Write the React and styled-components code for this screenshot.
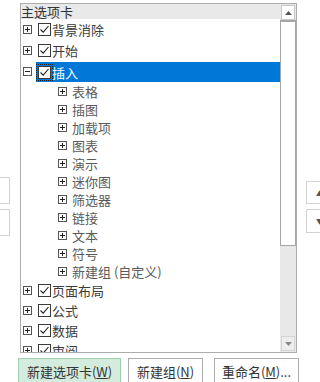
import React from "react";
import styled, { createGlobalStyle } from "styled-components";

const GlobalStyle = createGlobalStyle`
  html, body {
    margin: 0;
    padding: 0;
    background: #fff;
    width: 320px;
    height: 382px;
    overflow: hidden;
  }
  body {
    font-family: "Noto Sans CJK SC", "Liberation Sans", sans-serif;
    font-size: 13px;
    color: #3c3c3c;
  }
`;

const items = [
  { label: "背景消除", checked: true },
  { label: "开始", checked: true },
  {
    label: "插入",
    checked: true,
    selected: true,
    open: true,
    children: ["表格", "插图", "加载项", "图表", "演示", "迷你图", "筛选器", "链接", "文本", "符号", "新建组 (自定义)"],
  },
  { label: "页面布局", checked: true },
  { label: "公式", checked: true },
  { label: "数据", checked: true },
  { label: "审阅", checked: true },
];

const Page = styled.div`
  display: grid;
  grid-template-columns: 10px 10px 277px 9px 14px;
  grid-template-rows: 350px auto;
  row-gap: 5px;
  padding-top: 3px;
`;

const Side = styled.div`
  grid-column: ${(p) => p.$col};
  display: flex;
  flex-direction: column;
  gap: 5px;
  padding-top: ${(p) => p.$top}px;
`;

const SideBox = styled.div`
  height: ${(p) => p.$h}px;
  border: 1px solid #d2d2d2;
  ${(p) => (p.$right ? "border-right: none;" : "border-left: none;")}
  background: #fff;
  display: flex;
  align-items: center;
  justify-content: flex-end;
  font-size: 7px;
  color: #555;
  overflow: hidden;
  span {
    margin-right: -3px;
  }
`;

const Panel = styled.div`
  grid-column: 3;
  border: 1px solid #acacac;
  display: flex;
  overflow: hidden;
`;

const List = styled.div`
  flex: 1;
  display: flex;
  flex-direction: column;
  overflow: hidden;
`;

const Header = styled.div`
  height: 15px;
  flex: none;
  background: #e9e9e9;
  display: flex;
  align-items: center;
  color: #333;
  white-space: nowrap;
`;

const Row = styled.div`
  display: flex;
  align-items: center;
  flex: none;
  height: ${(p) => p.$h}px;
  padding-left: ${(p) => p.$indent}px;
  white-space: nowrap;
`;

const Label = styled.div`
  flex: 1;
  align-self: stretch;
  display: flex;
  align-items: center;
  margin: ${(p) => (p.$selected ? "1px 0 0 4px" : "0 0 0 4px")};
  padding-left: 2px;
  background: ${(p) => (p.$selected ? "#0078d7" : "transparent")};
  color: ${(p) => (p.$selected ? "#fff" : "#3c3c3c")};
`;

const SubText = styled.span`
  margin-left: 5px;
  color: #5a5a5a;
`;

const Check = styled.div`
  width: 13px;
  height: 13px;
  flex: none;
  margin-right: 1px;
  outline: ${(p) => (p.$focus ? "1px dotted #222" : "none")};
  outline-offset: 1px;
  display: flex;
`;

const Scrollbar = styled.div`
  width: 16px;
  flex: none;
  background: #e8e8e8;
  display: flex;
  flex-direction: column;
  padding-top: 1px;
  box-sizing: border-box;
`;

const ArrowButton = styled.div`
  height: 15px;
  flex: none;
  box-sizing: border-box;
  border: 1px solid ${(p) => (p.$light ? "#d4d4d4" : "#c8c8c8")};
  background: ${(p) => (p.$light ? "#ededed" : "#fff")};
  display: flex;
  align-items: center;
  justify-content: center;
  margin: 0 1px;
`;

const Thumb = styled.div`
  height: 226px;
  flex: none;
  box-sizing: border-box;
  border: 1px solid #a6a6a6;
  border-top-width: 2px;
  background: #fff;
`;

const Track = styled.div`
  flex: 1;
`;

const Spacer = styled.div`
  height: 1px;
  flex: none;
`;

const Buttons = styled.div`
  grid-column: 1 / -1;
  display: flex;
  padding-left: 18px;
  gap: 7px;
`;

const Button = styled.div`
  width: ${(p) => p.$w}px;
  margin-left: ${(p) => p.$ml || 0}px;
  height: 26px;
  box-sizing: border-box;
  border: 1px solid ${(p) => (p.$primary ? "#9fcdb0" : "#adadad")};
  background: ${(p) => (p.$primary ? "#d3ecdd" : "#fff")};
  display: flex;
  align-items: center;
  justify-content: center;
  color: #333;
  white-space: nowrap;
  u {
    text-decoration: underline;
  }
`;

const Expander = ({ open }) => (
  <svg width="9" height="9" viewBox="0 0 9 9" style={{ flex: "none" }}>
    <rect x="0.5" y="0.5" width="8" height="8" fill="#fff" stroke="#555" />
    <line x1="2" y1="4.5" x2="7" y2="4.5" stroke="#222" />
    {!open && <line x1="4.5" y1="2" x2="4.5" y2="7" stroke="#222" />}
  </svg>
);

const CheckBox = ({ focus }) => (
  <Check $focus={focus}>
    <svg width="13" height="13" viewBox="0 0 13 13">
      <rect x="0.5" y="0.5" width="12" height="12" fill="#fff" stroke="#3a3a3a" />
      <path d="M2.5 6.5 L5.2 9.2 L10.5 3" fill="none" stroke="#222" strokeWidth="1.1" />
    </svg>
  </Check>
);

const Tri = ({ down }) => (
  <svg width="7" height="4" viewBox="0 0 7 4">
    <path d={down ? "M0 0 H7 L3.5 4 Z" : "M0 4 H7 L3.5 0 Z"} fill={down ? "#888" : "#555"} />
  </svg>
);

const App = () => {
  const rows = [];
  items.forEach((it, i) => {
    rows.push(
      <Row key={it.label} $h={i < 3 ? 21 : 20} $indent={2}>
        <Expander open={it.open} />
        <Label $selected={it.selected}>
          <CheckBox focus={it.selected} />
          {it.label}
        </Label>
      </Row>
    );
    if (it.children) {
      it.children.forEach((c) =>
        rows.push(
          <Row key={c} $h={18} $indent={37}>
            <Expander />
            <SubText>{c}</SubText>
          </Row>
        )
      );
    }
  });

  return (
    <>
      <GlobalStyle />
      <Page>
        <Side $col={1} $top={174}>
          <SideBox $h={25} />
          <SideBox $h={25} />
        </Side>
        <Panel>
          <List>
            <Header>主选项卡</Header>
            {rows}
          </List>
          <Scrollbar>
            <ArrowButton>
              <Tri />
            </ArrowButton>
            <Thumb />
            <Track />
            <ArrowButton $light>
              <Tri down />
            </ArrowButton>
            <Spacer />
          </Scrollbar>
        </Panel>
        <Side $col={5} $top={178}>
          <SideBox $h={21} $right>
            <span>▲</span>
          </SideBox>
          <SideBox $h={22} $right>
            <span>▼</span>
          </SideBox>
        </Side>
        <Buttons>
          <Button $w={103} $primary>
            新建选项卡(<u>W</u>)
          </Button>
          <Button $w={75}>
            新建组(<u>N</u>)
          </Button>
          <Button $w={85} $ml={4}>
            重命名(<u>M</u>)...
          </Button>
        </Buttons>
      </Page>
    </>
  );
};

export default App;
